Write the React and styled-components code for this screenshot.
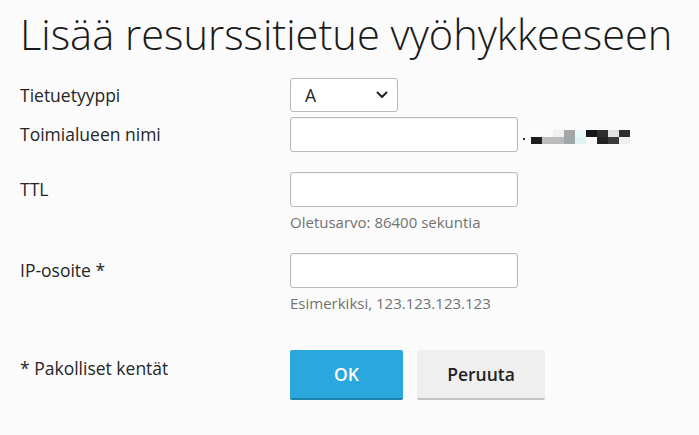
import React from "react";
import styled, { createGlobalStyle } from "styled-components";

const Global = createGlobalStyle`
  html, body { margin: 0; padding: 0; background: #fbfbfb; }
  body { font-family: "Open Sans", "DejaVu Sans", sans-serif; color: #222; }
`;

const Page = styled.div`
  padding: 0 20px;
`;

const Title = styled.h1`
  margin: 0;
  padding-top: 6px;
  font-size: 41.6px;
  line-height: 56px;
  font-weight: 300;
  color: #1a1a1a;
  white-space: nowrap;
`;

const Form = styled.form`
  display: grid;
  grid-template-columns: 270px 1fr;
  margin-top: 16px;
`;

const Row = styled.div`
  display: contents;
`;

const Label = styled.label`
  display: block;
  padding-top: 5px;
  font-size: 17.5px;
  line-height: 24px;
  color: #262626;
  margin-top: ${(p) => p.$mt || 0}px;
`;

const Field = styled.div`
  display: flex;
  flex-direction: column;
  margin-top: ${(p) => p.$mt || 0}px;
`;

const Inline = styled.div`
  display: flex;
  align-items: center;
`;

const SelectWrap = styled.div`
  position: relative;
  width: 108px;
  height: 34px;
`;

const Select = styled.select`
  appearance: none;
  width: 100%;
  height: 100%;
  box-sizing: border-box;
  border: 1px solid #b9b9b9;
  border-radius: 3px;
  background: #fff;
  font-family: "Open Sans", sans-serif;
  font-size: 17.5px;
  color: #222;
  padding: 0 0 0 14px;
`;

const Chevron = styled.svg`
  position: absolute;
  right: 10px;
  top: 13px;
  pointer-events: none;
`;

const Input = styled.input`
  width: 228px;
  height: 35px;
  box-sizing: border-box;
  border: 1px solid #b9b9b9;
  border-radius: 3px;
  background: #fff;
  box-shadow: inset 0 1px 2px rgba(0, 0, 0, 0.06);
  font-family: "Open Sans", sans-serif;
  font-size: 16px;
  padding: 0 8px;
`;

const Hint = styled.div`
  font-size: 15px;
  line-height: 20px;
  color: #727272;
  margin-top: 5px;
`;

const Mosaic = styled.div`
  position: relative;
  display: grid;
  grid-template-columns: repeat(9, 11px);
  grid-auto-rows: 7px;
  margin-left: 13px;
  margin-top: 4px;
`;

const Dot = styled.span`
  position: absolute;
  left: -8px;
  top: 8px;
  width: 2px;
  height: 2px;
  background: #333;
`;

const Cell = styled.span`
  background: ${(p) => p.$c};
`;

const Required = styled.div`
  font-size: 17.5px;
  line-height: 24px;
  color: #262626;
  padding-top: 6px;
  margin-top: 37px;
`;

const Buttons = styled.div`
  display: flex;
  gap: 14px;
  margin-top: 37px;
`;

const Button = styled.button`
  height: 50px;
  width: ${(p) => p.$w}px;
  border: none;
  border-radius: 2px;
  font-family: "Open Sans", sans-serif;
  font-size: 17.5px;
  font-weight: 600;
  cursor: pointer;
  padding: 0;
  background: ${(p) => (p.$primary ? "#2aa7dc" : "#efefef")};
  color: ${(p) => (p.$primary ? "#fff" : "#222")};
  border-bottom: 2px solid ${(p) => (p.$primary ? "#1f81ad" : "#c2c2c2")};
`;

const cells = [
  "#fcfcfc", "#fbfbfb", "#f0f0f0", "#a5a5a5", "#e6f8f8", "#161616", "#2e2e2e", "#e1e1e1", "#2f2f2f",
  "#1e1e1e", "#bdbdbd", "#bbbbbb", "#9ea8ab", "#dff3f4", "#fafafa", "#222222", "#3a3a3a", "#eff0f3",
];

export default function App() {
  return (
    <>
      <Global />
      <Page>
        <Title>Lisää resurssitietue vyöhykkeeseen</Title>
        <Form onSubmit={(e) => e.preventDefault()}>
          <Row>
            <Label>Tietuetyyppi</Label>
            <Field>
              <SelectWrap>
                <Select defaultValue="A">
                  <option>A</option>
                  <option>AAAA</option>
                  <option>CNAME</option>
                  <option>MX</option>
                  <option>TXT</option>
                </Select>
                <Chevron width="12" height="8" viewBox="0 0 12 8">
                  <path d="M1.5 1.5 L6 6 L10.5 1.5" fill="none" stroke="#222" strokeWidth="2" strokeLinecap="round" strokeLinejoin="round" />
                </Chevron>
              </SelectWrap>
            </Field>
          </Row>
          <Row>
            <Label $mt={5}>Toimialueen nimi</Label>
            <Field $mt={5}>
              <Inline>
                <Input type="text" />
                <Mosaic>
                  <Dot />
                  {cells.map((c, i) => (
                    <Cell key={i} $c={c} />
                  ))}
                </Mosaic>
              </Inline>
            </Field>
          </Row>
          <Row>
            <Label $mt={20}>TTL</Label>
            <Field $mt={20}>
              <Input type="text" />
              <Hint>Oletusarvo: 86400 sekuntia</Hint>
            </Field>
          </Row>
          <Row>
            <Label $mt={21}>IP-osoite *</Label>
            <Field $mt={21}>
              <Input type="text" />
              <Hint>Esimerkiksi, 123.123.123.123</Hint>
            </Field>
          </Row>
          <Row>
            <Required>* Pakolliset kentät</Required>
            <Buttons>
              <Button type="submit" $primary $w={113}>OK</Button>
              <Button type="button" $w={128}>Peruuta</Button>
            </Buttons>
          </Row>
        </Form>
      </Page>
    </>
  );
}
